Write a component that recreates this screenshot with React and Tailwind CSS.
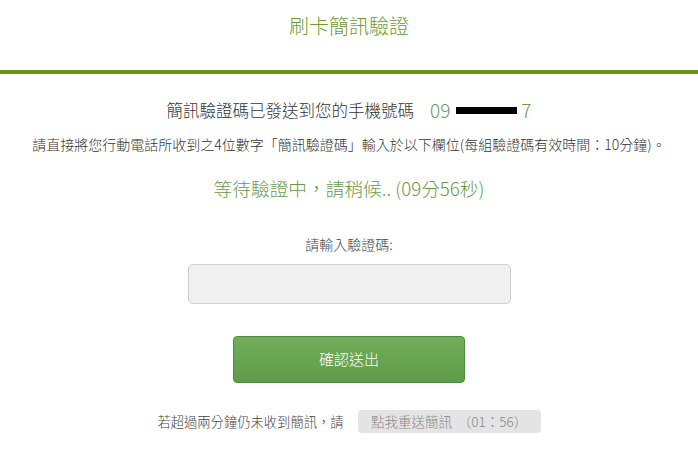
import React, { useState } from 'react';

const font = { fontFamily: '"Noto Sans CJK TC", "Noto Sans", sans-serif' };

export default function App() {
  const [code, setCode] = useState('');

  return (
    <div className="w-[698px] h-[462px] bg-white text-[#333] font-light" style={font}>
      <header className="h-[70px] pt-[15px]">
        <h1 className="text-center text-[20px] text-[#6f9a2c] font-light leading-[22px]">刷卡簡訊驗證</h1>
      </header>
      <div className="h-[4px] bg-[#6b9414]" />

      <main className="flex flex-col items-center">
        <p className="mt-[24px] text-[16.5px] leading-[24px] flex items-center">
          <span>簡訊驗證碼已發送到您的手機號碼</span>
          <span className="ml-[16px] text-[19px] text-[#6f9a50]">09</span>
          <span className="ml-[6px] block w-[61px] h-[7px] min-h-[7px] bg-black shrink-0" />
          <span className="ml-[4px] text-[19px] text-[#6f9a50]">7</span>
        </p>
        <p className="mt-[13px] text-[14px] leading-[18px]">
          請直接將您行動電話所收到之4位數字「簡訊驗證碼」輸入於以下欄位(每組驗證碼有效時間：10分鐘)。
        </p>
        <p className="mt-[22px] text-[18.7px] leading-[26px] text-[#6a9a48]">
          等待驗證中，請稍候.. (09分56秒)
        </p>
        <label className="mt-[33px] text-[14px] leading-[20px] text-[#444]">請輸入驗證碼:</label>
        <input
          value={code}
          onChange={e => setCode(e.target.value)}
          className="mt-[10px] w-[323px] h-[40px] bg-[#f0f0f0] border border-[#cfcfcf] rounded-[5px] px-3 text-[15px] outline-none"
        />
        <button className="mt-[32px] w-[232px] h-[47px] rounded-[4px] border border-[#4f8a3c] bg-gradient-to-b from-[#72ad59] to-[#5f9c4a] text-white text-[15px] font-light">
          確認送出
        </button>
        <div className="mt-[27px] flex items-center text-[13.3px] text-[#444]">
          <span>若超過兩分鐘仍未收到簡訊，請</span>
          <button className="ml-[14px] h-[23px] w-[183px] bg-[#e4e4e4] rounded-[4px] text-[#888] text-[13.5px] font-light">
            點我重送簡訊&nbsp;&nbsp;（01：56）
          </button>
        </div>
      </main>
    </div>
  );
}
